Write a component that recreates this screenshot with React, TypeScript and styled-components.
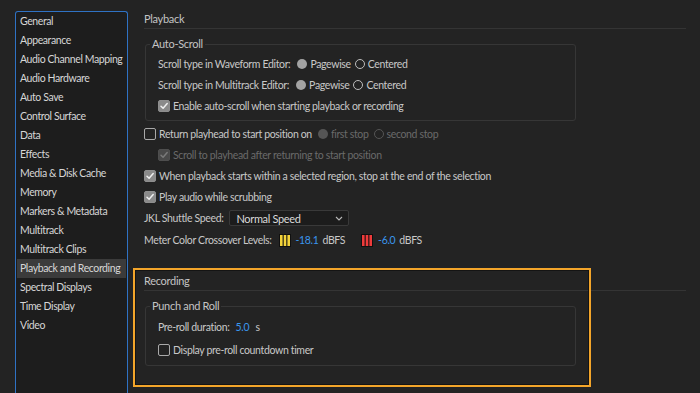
import React from "react";
import styled, { createGlobalStyle } from "styled-components";

const GlobalStyle = createGlobalStyle`
  html, body {
    margin: 0;
    padding: 0;
    background: #232323;
  }
  body {
    font-family: Lato, "Open Sans", sans-serif;
    font-size: 10.5px;
    letter-spacing: -0.35px;
    color: #c8c8c8;
    overflow: hidden;
  }
`;

const CATEGORIES = [
  "General",
  "Appearance",
  "Audio Channel Mapping",
  "Audio Hardware",
  "Auto Save",
  "Control Surface",
  "Data",
  "Effects",
  "Media & Disk Cache",
  "Memory",
  "Markers & Metadata",
  "Multitrack",
  "Multitrack Clips",
  "Playback and Recording",
  "Spectral Displays",
  "Time Display",
  "Video",
];

const SELECTED = "Playback and Recording";

const Page = styled.div`
  display: flex;
  height: 393px;
  padding-left: 15px;
  box-sizing: border-box;
`;

const Sidebar = styled.ul`
  list-style: none;
  margin: 11px 0 0 0;
  padding: 0 1px;
  width: 109px;
  flex: none;
  background: #1d1d1d;
  border: 1px solid #2f72c4;
  border-bottom: none;
  border-radius: 3px 3px 0 0;
`;

const SidebarItem = styled.li<{ $selected: boolean }>`
  height: 19px;
  line-height: 19px;
  padding-left: 3px;
  font-size: 10.5px;
  letter-spacing: -0.4px;
  color: #d6d6d6;
  white-space: nowrap;
  background: ${({ $selected }) => ($selected ? "#3b3b3b" : "transparent")};
`;

const Main = styled.div`
  flex: 1;
  padding: 10px 14px 0 16px;
`;

const SectionTitle = styled.div`
  line-height: 18px;
  font-size: 11px;
  letter-spacing: -0.3px;
  color: #c4c4c4;
  border-bottom: 1px solid #343434;
`;

const Group = styled.fieldset<{ $top: number }>`
  margin: ${({ $top }) => $top}px 0 0 1px;
  width: 431px;
  box-sizing: border-box;
  min-width: 0;
  border: 1px solid #363636;
  border-radius: 3px;
  padding: 1px 0 4px 4px;
`;

const Legend = styled.legend`
  padding: 0 2px;
  line-height: 14px;
  font-size: 11px;
  letter-spacing: -0.3px;
  color: #c4c4c4;
`;

const Row = styled.div<{ $h?: number; $indent?: number }>`
  display: flex;
  align-items: center;
  height: ${({ $h }) => $h ?? 21}px;
  padding-left: ${({ $indent }) => $indent ?? 0}px;
  white-space: nowrap;
`;

const Label = styled.span<{ $disabled?: boolean; $gap?: number }>`
  color: ${({ $disabled }) => ($disabled ? "#6a6a6a" : "#c8c8c8")};
  margin-right: ${({ $gap }) => $gap ?? 0}px;
`;

const Value = styled.span`
  color: #3a96ee;
  margin-right: 4px;
`;

const Box = styled.span<{ $checked?: boolean; $disabled?: boolean }>`
  display: inline-flex;
  align-items: center;
  justify-content: center;
  width: 12px;
  height: 12px;
  box-sizing: border-box;
  border-radius: 2px;
  margin-right: 3px;
  flex: none;
  border: ${({ $checked, $disabled }) =>
    $checked
      ? `1px solid ${$disabled ? "#4e4e4e" : "#8e8e8e"}`
      : "1.5px solid #a9a9a9"};
  background: ${({ $checked, $disabled }) =>
    $checked ? ($disabled ? "#4a4a4a" : "#8a8a8a") : "transparent"};
`;

const Radio = styled.span<{ $on?: boolean; $disabled?: boolean }>`
  display: inline-block;
  width: 10px;
  height: 10px;
  box-sizing: border-box;
  border-radius: 50%;
  margin-right: 3px;
  flex: none;
  background: ${({ $on, $disabled }) =>
    $on ? ($disabled ? "#555" : "#a3a3a3") : "transparent"};
  border: ${({ $on, $disabled }) =>
    $on ? "none" : `1.3px solid ${$disabled ? "#555" : "#bdbdbd"}`};
`;

const Select = styled.div`
  display: flex;
  align-items: center;
  justify-content: space-between;
  width: 120px;
  height: 16px;
  box-sizing: border-box;
  margin-left: 6px;
  padding: 0 5px 0 6px;
  background: #1c1c1c;
  border: 1px solid #393939;
  border-radius: 2px;
  color: #dadada;
  font-size: 11px;
`;

const Recording = styled.section`
  position: relative;
  margin-top: 21px;
`;

const Highlight = styled.div`
  position: absolute;
  left: -11px;
  top: -4px;
  width: 458px;
  height: 119px;
  box-sizing: border-box;
  border: 2px solid #f3a52a;
  box-shadow: inset 0 0 0 1px #141414;
  pointer-events: none;
`;

const Checkbox = ({ checked, disabled }: { checked?: boolean; disabled?: boolean }) => (
  <Box $checked={checked} $disabled={disabled}>
    {checked && (
      <svg width="10" height="10" viewBox="0 0 10 10">
        <path
          d="M2 5.2 L4.1 7.3 L8.2 2.6"
          fill="none"
          stroke={disabled ? "#7a7a7a" : "#efefef"}
          strokeWidth="1.5"
          strokeLinecap="round"
          strokeLinejoin="round"
        />
      </svg>
    )}
  </Box>
);

const MeterIcon = ({ color }: { color: string }) => (
  <svg width="12" height="13" viewBox="0 0 12 13" style={{ marginRight: 5 }}>
    <rect x="0" y="0" width="12" height="13" fill="#101010" />
    <rect x="1" y="1" width="2.6" height="11" fill={color} />
    <rect x="4.7" y="1" width="2.6" height="11" fill={color} />
    <rect x="8.4" y="1" width="2.6" height="11" fill={color} />
  </svg>
);

const Chevron = () => (
  <svg width="8" height="5" viewBox="0 0 8 5">
    <path d="M1 1 L4 4 L7 1" fill="none" stroke="#b8b8b8" strokeWidth="1.1" />
  </svg>
);

const ScrollTypeRow = ({ label }: { label: string }) => (
  <Row $indent={8}>
    <Label $gap={7}>{label}</Label>
    <Radio $on />
    <Label $gap={4}>Pagewise</Label>
    <Radio />
    <Label>Centered</Label>
  </Row>
);

export default function App() {
  return (
    <>
      <GlobalStyle />
      <Page>
        <Sidebar>
          {CATEGORIES.map((c) => (
            <SidebarItem key={c} $selected={c === SELECTED}>
              {c}
            </SidebarItem>
          ))}
        </Sidebar>
        <Main>
          <SectionTitle>Playback</SectionTitle>
          <Group $top={8}>
            <Legend>Auto-Scroll</Legend>
            <Row $h={1} />
            <ScrollTypeRow label="Scroll type in Waveform Editor:" />
            <ScrollTypeRow label="Scroll type in Multitrack Editor:" />
            <Row $indent={8}>
              <Checkbox checked />
              <Label>Enable auto-scroll when starting playback or recording</Label>
            </Row>
          </Group>
          <Row $h={2} />
          <Row>
            <Checkbox />
            <Label $gap={6}>Return playhead to start position on</Label>
            <Radio $on $disabled />
            <Label $disabled $gap={5}>first stop</Label>
            <Radio $disabled />
            <Label $disabled>second stop</Label>
          </Row>
          <Row $indent={14}>
            <Checkbox checked disabled />
            <Label $disabled>Scroll to playhead after returning to start position</Label>
          </Row>
          <Row>
            <Checkbox checked />
            <Label>When playback starts within a selected region, stop at the end of the selection</Label>
          </Row>
          <Row>
            <Checkbox checked />
            <Label>Play audio while scrubbing</Label>
          </Row>
          <Row $h={22}>
            <Label>JKL Shuttle Speed:</Label>
            <Select>
              <span>Normal Speed</span>
              <Chevron />
            </Select>
          </Row>
          <Row $h={22}>
            <Label $gap={7}>Meter Color Crossover Levels:</Label>
            <MeterIcon color="#f2d23a" />
            <Value>-18.1</Value>
            <Label $gap={16}>dBFS</Label>
            <MeterIcon color="#ee3b3b" />
            <Value>-6.0</Value>
            <Label>dBFS</Label>
          </Row>
          <Recording>
            <SectionTitle>Recording</SectionTitle>
            <Group $top={8}>
              <Legend>Punch and Roll</Legend>
              <Row $h={2} />
              <Row $indent={8} $h={22}>
                <Label $gap={6}>Pre-roll duration:</Label>
                <Value>5.0</Value>
                <Label>&nbsp;s</Label>
              </Row>
              <Row $indent={8} $h={23}>
                <Checkbox />
                <Label>Display pre-roll countdown timer</Label>
              </Row>
            </Group>
            <Highlight />
          </Recording>
        </Main>
      </Page>
    </>
  );
}
